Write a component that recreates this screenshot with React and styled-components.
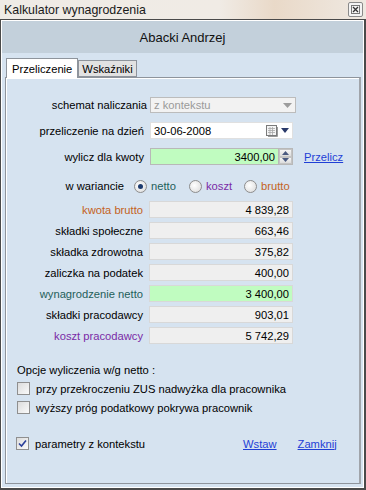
import React from "react";
import styled, { createGlobalStyle } from "styled-components";

const Global = createGlobalStyle`
  html, body { margin: 0; padding: 0; }
  body {
    width: 366px;
    height: 490px;
    overflow: hidden;
    background: #ece6de;
    font-family: "Liberation Sans", Arial, sans-serif;
    font-size: 11.2px;
    color: #000;
  }
`;

const TitleBar = styled.div`
  height: 19px;
  display: flex;
  align-items: center;
  justify-content: space-between;
  padding: 0 3px 0 4px;
  background: linear-gradient(90deg, #efebe6 0%, #f0ebe5 60%, #e9d9c8 75%, #efe9e2 100%);
  font-size: 12.4px;
  color: #1a1a1a;
`;

const CloseBox = styled.div`
  width: 13px;
  height: 13px;
  border: 1px solid #8a8a8a;
  border-radius: 2px;
  background: #f4f4f4;
  display: flex;
  align-items: center;
  justify-content: center;
`;

const Window = styled.div`
  height: 471px;
  box-sizing: border-box;
  border: 1px solid #4a4a4a;
  border-right-width: 2px;
  border-bottom-width: 2px;
  padding: 1px;
  background: #ffffff;
`;

const Inner = styled.div`
  height: 100%;
  box-sizing: border-box;
  background: #d6e3f0;
  display: flex;
  flex-direction: column;
`;

const Header = styled.div`
  height: 32px;
  flex: none;
  background: #c3d0db;
  display: flex;
  align-items: center;
  justify-content: center;
  font-size: 13px;
  color: #111;
`;

const Body = styled.div`
  flex: 1;
  padding: 5px 2px 3px 3px;
  display: flex;
  flex-direction: column;
`;

const Tabs = styled.div`
  display: flex;
  align-items: flex-end;
  height: 19px;
  padding-left: 1px;
`;

const Tab = styled.div`
  box-sizing: border-box;
  height: ${(p) => (p.$active ? "20px" : "17px")};
  padding: 0 ${(p) => (p.$active ? "5px" : "3px")};
  background: ${(p) => (p.$active ? "#ffffff" : "#e2e2e2")};
  border: 1px solid #8e949c;
  border-bottom: ${(p) => (p.$active ? "none" : "1px solid #8e949c")};
  display: flex;
  align-items: center;
  margin-bottom: ${(p) => (p.$active ? "-1px" : "0")};
  position: relative;
  z-index: ${(p) => (p.$active ? 1 : 0)};
`;

const Panel = styled.div`
  flex: 1;
  box-sizing: border-box;
  border: 1px solid #8e949c;
  border-right: 2px solid #a0a4aa;
  background: #d6e3f0;
  box-shadow: inset 1px 1px 0 #ffffff;
  padding: 19px 0 0 2px;
  display: flex;
  flex-direction: column;
`;

const Row = styled.div`
  display: flex;
  align-items: center;
  height: ${(p) => p.$h || 17}px;
  margin-bottom: ${(p) => p.$mb || 0}px;
`;

const Label = styled.div`
  width: ${(p) => p.$w || 137}px;
  padding-right: ${(p) => p.$pr ?? 6}px;
  text-align: right;
  white-space: nowrap;
  color: ${(p) => p.$color || "#000"};
`;

const Field = styled.div`
  box-sizing: border-box;
  width: ${(p) => p.$w || 143}px;
  height: 100%;
  border: 1px solid ${(p) => p.$border || "#c8c8c8"};
  background: ${(p) => p.$bg || "#f0f0f0"};
  display: flex;
  align-items: center;
  justify-content: ${(p) => (p.$right ? "flex-end" : "space-between")};
  padding: 0 3px 0 3px;
  color: ${(p) => p.$color || "#000"};
  white-space: nowrap;
`;

const Spinner = styled.div`
  width: 14px;
  height: 100%;
  box-sizing: border-box;
  border: 1px solid #b8b8b8;
  border-left: none;
  display: flex;
  flex-direction: column;
  background: #fff;
`;

const SpinBtn = styled.div`
  flex: 1;
  display: flex;
  align-items: center;
  justify-content: center;
  background: linear-gradient(#f6f6f6, #dcdcdc);
  border: 1px solid #c4c4c4;
`;

const Link = styled.span`
  color: #1f3fd6;
  text-decoration: underline;
  cursor: pointer;
  margin-left: ${(p) => p.$ml || 0}px;
`;

const RadioRow = styled.div`
  display: flex;
  align-items: center;
  height: 18px;
  margin: 12px 0 6px 0;
`;

const RadioItem = styled.label`
  display: flex;
  align-items: center;
  gap: 4px;
  width: ${(p) => p.$w}px;
  color: ${(p) => p.$color};
`;

const RadioDot = styled.span`
  width: 11px;
  height: 11px;
  border-radius: 50%;
  border: 1px solid #8d8d8d;
  background: radial-gradient(circle at 40% 40%, #ffffff 0%, #e4e4e4 70%, #cfcfcf 100%);
  display: flex;
  align-items: center;
  justify-content: center;
  &::after {
    content: "";
    width: 5px;
    height: 5px;
    border-radius: 50%;
    background: ${(p) => (p.$on ? "#1c3a6e" : "transparent")};
  }
`;

const Results = styled.div`
  display: flex;
  flex-direction: column;
  gap: 4px;
`;

const Options = styled.div`
  padding-left: 9px;
  margin-top: 16px;
  display: flex;
  flex-direction: column;
`;

const OptionsTitle = styled.div`
  height: 19px;
  display: flex;
  align-items: center;
`;

const CheckRow = styled.label`
  display: flex;
  align-items: center;
  gap: 6px;
  height: 19px;
  width: ${(p) => (p.$w ? `${p.$w}px` : "auto")};
`;

const Box = styled.span`
  width: 11px;
  height: 11px;
  border: 1px solid #8f8f8f;
  background: linear-gradient(135deg, #dcdcdc, #fafafa);
  display: flex;
  align-items: center;
  justify-content: center;
`;

const Footer = styled.div`
  display: flex;
  align-items: center;
  height: 19px;
  margin-top: 17px;
  padding-left: 8px;
`;

const DateIcons = styled.span`
  display: flex;
  align-items: center;
  gap: 3px;
`;

const results = [
  { label: "kwota brutto", value: "4 839,28", color: "#c4621c" },
  { label: "składki społeczne", value: "663,46" },
  { label: "składka zdrowotna", value: "375,82" },
  { label: "zaliczka na podatek", value: "400,00" },
  { label: "wynagrodzenie netto", value: "3 400,00", color: "#1f5f5a", bg: "#c0fcc0" },
  { label: "składki pracodawcy", value: "903,01" },
  { label: "koszt pracodawcy", value: "5 742,29", color: "#7a2aa6" },
];

function Tick() {
  return (
    <svg width="9" height="9" viewBox="0 0 9 9">
      <path d="M1 4.5 L3.5 7 L8 1.5" fill="none" stroke="#2a3f9a" strokeWidth="1.6" />
    </svg>
  );
}

export default function App() {
  return (
    <>
      <Global />
      <TitleBar>
        <span>Kalkulator wynagrodzenia</span>
        <CloseBox>
          <svg width="9" height="9" viewBox="0 0 9 9">
            <rect x="0.5" y="0.5" width="8" height="8" fill="none" stroke="#777" />
            <path d="M2 2 L7 7 M7 2 L2 7" stroke="#333" strokeWidth="1.3" />
          </svg>
        </CloseBox>
      </TitleBar>
      <Window>
        <Inner>
          <Header>Abacki Andrzej</Header>
          <Body>
            <Tabs>
              <Tab $active>Przeliczenie</Tab>
              <Tab>Wskaźniki</Tab>
            </Tabs>
            <Panel>
              <Row $h={16} $mb={9}>
                <Label $pr={3} $w={139}>schemat naliczania</Label>
                <Field $border="#bcbcbc" $bg="#f2f2f2" $color="#9a9a9a" $w={146}>
                  <span>z kontekstu</span>
                  <svg width="9" height="5" viewBox="0 0 9 5">
                    <path d="M0 0 H9 L4.5 5 Z" fill="#9c9c9c" />
                  </svg>
                </Field>
              </Row>
              <Row $h={17} $mb={9}>
                <Label $w={136}>przeliczenie na dzień</Label>
                <Field $border="#e0e0e0" $bg="#ffffff">
                  <span>30-06-2008</span>
                  <DateIcons>
                    <svg width="12" height="12" viewBox="0 0 12 12">
                      <rect x="0.5" y="0.5" width="10" height="10" fill="#f4f4f4" stroke="#7a7a7a" />
                      <path d="M2 3.5 H9 M2 5.5 H9 M2 7.5 H9 M4 2 V10 M6.5 2 V10" stroke="#a8a8a8" strokeWidth="0.8" />
                      <path d="M11.5 2 V11.5 H2" stroke="#9a9a9a" fill="none" />
                    </svg>
                    <svg width="8" height="5" viewBox="0 0 8 5">
                      <path d="M0 0 H8 L4 5 Z" fill="#2a3a6a" />
                    </svg>
                  </DateIcons>
                </Field>
              </Row>
              <Row $h={17}>
                <Label $w={136}>wylicz dla kwoty</Label>
                <Field $w={129} $border="#b8b8b8" $bg="#c0fcc0" $right>
                  3400,00
                </Field>
                <Spinner>
                  <SpinBtn>
                    <svg width="7" height="4" viewBox="0 0 7 4">
                      <path d="M0 4 H7 L3.5 0 Z" fill="#4a5a80" />
                    </svg>
                  </SpinBtn>
                  <SpinBtn>
                    <svg width="7" height="4" viewBox="0 0 7 4">
                      <path d="M0 0 H7 L3.5 4 Z" fill="#4a5a80" />
                    </svg>
                  </SpinBtn>
                </Spinner>
                <Link $ml={11}>Przelicz</Link>
              </Row>
              <RadioRow>
                <Label $w={116} $pr={10}>w wariancie</Label>
                <RadioItem $color="#1f5f5a" $w={55}>
                  <RadioDot $on />
                  netto
                </RadioItem>
                <RadioItem $color="#7a2aa6" $w={55}>
                  <RadioDot />
                  koszt
                </RadioItem>
                <RadioItem $color="#c4621c">
                  <RadioDot />
                  brutto
                </RadioItem>
              </RadioRow>
              <Results>
                {results.map((r) => (
                  <Row key={r.label} $h={17}>
                    <Label $color={r.color} $w={135}>{r.label}</Label>
                    <Field $right $bg={r.bg || "#efefef"} $border="#d8d8d8" $w={144}>
                      {r.value}
                    </Field>
                  </Row>
                ))}
              </Results>
              <Options>
                <OptionsTitle>Opcje wyliczenia w/g netto :</OptionsTitle>
                <CheckRow>
                  <Box />
                  przy przekroczeniu ZUS nadwyżka dla pracownika
                </CheckRow>
                <CheckRow>
                  <Box />
                  wyższy próg podatkowy pokrywa pracownik
                </CheckRow>
              </Options>
              <Footer>
                <CheckRow $w={227}>
                  <Box>
                    <Tick />
                  </Box>
                  parametry z kontekstu
                </CheckRow>
                <Link>Wstaw</Link>
                <Link $ml={21}>Zamknij</Link>
              </Footer>
            </Panel>
          </Body>
        </Inner>
      </Window>
    </>
  );
}
